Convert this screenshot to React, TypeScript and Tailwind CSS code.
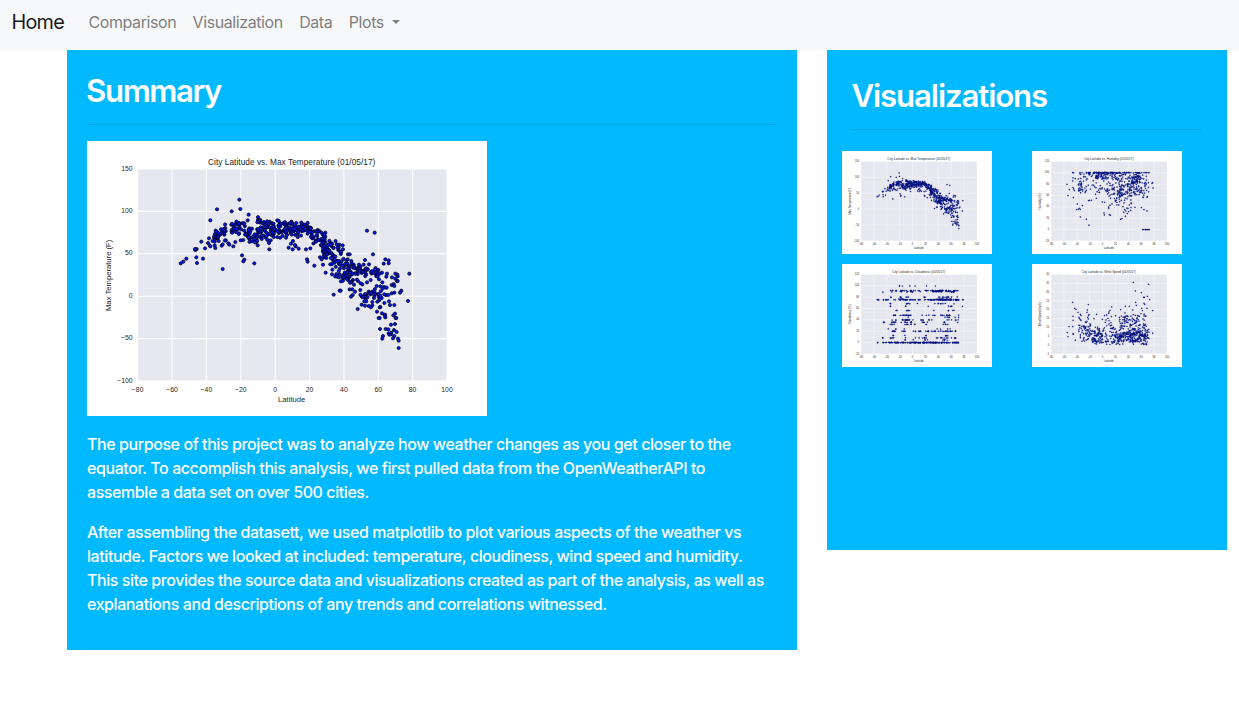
import React from "react";

type Point = [number, number];

/* All charts share a 1200 x 825 drawing space. */
const LEFT = 152;
const RIGHT = 1080;
const TOP = 84;
const BOTTOM = 720;

function rng(seed: number) {
  let s = seed;
  return () => {
    s = (s * 1664525 + 1013904223) % 4294967296;
    return s / 4294967296;
  };
}

function band(seed: number, count: number, path: [number, number, number][]): Point[] {
  const rand = rng(seed);
  const first = path[0][0];
  const last = path[path.length - 1][0];
  return Array.from({ length: count }, () => {
    const x = first + rand() * (last - first);
    let i = 0;
    while (i < path.length - 2 && x > path[i + 1][0]) i++;
    const [x0, y0, s0] = path[i];
    const [x1, y1, s1] = path[i + 1];
    const t = (x - x0) / (x1 - x0);
    const offset = (rand() + rand() - 1) * (s0 + (s1 - s0) * t);
    return [x, y0 + (y1 - y0) * t + offset] as Point;
  });
}

function box(seed: number, count: number, x0: number, x1: number, y0: number, y1: number, power = 1): Point[] {
  const rand = rng(seed);
  return Array.from({ length: count }, () => [x0 + rand() * (x1 - x0), y0 + Math.pow(rand(), power) * (y1 - y0)] as Point);
}

function parse(text: string): Point[] {
  return text
    .trim()
    .split(/\s+/)
    .map((pair) => pair.split(",").map(Number) as Point);
}

const grow = (points: Point[]): Point[] => points.map(([x, y]) => [x * 2.6667, y * 2.6667]);

const temperature: Point[] = [
  ...parse(`281,367 289,362 298,353 348,353 330,366 328,349 325,327 329,324 324,324 354,322 343,302 363,306 370,238
    390,205 434,211 460,204 457,176 485,221 407,384 465,343 472,356 469,361 502,367 547,325 482,238 551,298 546,306
    605,320 617,325 635,323 657,325 670,322 612,308 618,300 626,316 624,312 597,290 660,355 662,362 682,374 699,349
    704,355 708,371 716,395 735,400 840,269 863,275 858,340 715,275 725,310 733,307 740,461 758,449 761,449 812,504
    834,357 846,370 890,368 895,355 905,358 905,367 874,387 967,398 963,480 943,449 939,455 931,401 925,398 932,406
    930,420 935,621 935,599 933,593 922,585 918,592 929,573 921,567 912,551 924,549 919,523 928,531 924,518 926,531
    894,521 895,529 894,524 885,517 878,531 875,531 870,512 879,564 896,564 904,565 888,585 886,593 905,577 907,581
    912,580 913,575 922,492 909,492 906,481 892,486 880,498 878,499 824,491 834,494 845,495 852,499 856,493 856,483
    386,269 392,290 385,321 404,314 407,310 402,265 415,261 416,270 424,307 427,311 439,316 445,303 433,251 444,250
    454,247 472,247 456,277 368,313 370,316 366,292 377,300 387,280 390,282 388,287 390,292 385,292 383,313 395,300
    399,281 412,281 434,272 447,273 461,298 469,297 483,288 488,292 496,290 503,297 507,302 512,313 495,263 513,237
    520,237 519,244 531,243 571,238 554,246 590,246 613,242 616,247 602,249 645,248 653,251 660,255 672,261 680,271
    692,267 697,270 703,275 712,287 735,308 733,315 757,311 767,313 768,325 754,327 749,310 783,340 788,340 778,358
    782,355 793,360 800,371 801,378 816,371 820,376 830,371 864,398 878,398 885,395 900,398 898,407 915,409 925,413
    876,415 869,435 880,436 886,424 889,438 894,439 899,440 914,432 920,429 922,435 932,420 851,417 840,424 826,430
    821,427 813,420 810,416 801,431 788,445 796,445 804,452 797,462 792,467 820,447 824,466 832,466 861,471 862,464
    873,459 881,451 887,443 897,462 904,462 914,457 922,455 845,452 851,460 836,475 838,481 832,481 857,452 871,482
    876,478 884,471 892,460 875,468 879,474 880,464 762,421 768,419 790,425 779,411 784,418 798,417 795,400 788,407`),
  ...band(11, 24, [[380, 284, 30], [400, 286, 30], [425, 270, 34]]),
  ...band(18, 46, [[432, 264, 22], [460, 262, 26], [500, 285, 34], [515, 285, 36]]),
  ...band(12, 138, [[510, 262, 42], [560, 263, 32], [620, 265, 24], [665, 265, 25]]),
  ...band(13, 40, [[660, 270, 25], [690, 291, 26], [716, 306, 30]]),
  ...band(14, 84, [[704, 312, 34], [735, 350, 62], [775, 380, 62], [795, 397, 40]]),
  ...band(15, 14, [[765, 405, 24], [797, 403, 24]]),
  ...band(16, 40, [[792, 385, 24], [830, 391, 19], [875, 393, 20]]),
  ...band(17, 12, [[820, 463, 28], [860, 455, 20], [885, 472, 24]]),
];

const humidity = grow([
  ...parse(`105,100 108,134 112,116 123,81 122,90 130,83 139,84 123,110 125,114 127,119 124,140 136,159 151,164
    134,176 139,175 142,172 145,175 145,198 163,205 171,223 172,148 178,148 193,142 216,186 218,154 230,168 240,159
    232,191 235,193 217,192 211,153 170,149 266,205 270,203 275,184 280,196 286,188 296,178 309,169 328,170 345,180
    336,176 360,97 363,111 288,172 297,170 362,95 334,139 345,139 122,65 125,65 144,65 150,65 336,65 340,65 343,65
    348,65 351,65 332,236 341,236 343,236 346,236 349,236 352,236 339,236 334,236 333,139 290,182 292,162 281,180 278,176`),
  ...box(21, 95, 163, 330, 64, 67),
  ...box(22, 70, 140, 225, 67, 131, 1.4),
  ...box(23, 26, 190, 225, 67, 85),
  ...box(24, 62, 222, 270, 68, 132),
  ...box(25, 105, 262, 317, 69, 135),
  ...box(26, 40, 298, 325, 73, 106),
  ...box(27, 52, 310, 350, 70, 137),
  ...box(28, 34, 248, 298, 118, 172),
  ...box(29, 14, 138, 150, 90, 122),
  ...box(30, 8, 222, 255, 130, 172),
]);

const cloudRows: [number, number[][]][] = [
  [66, [[172, 174, 2], [181, 182, 1], [203, 205, 1], [219, 220, 1], [253, 255, 1], [280, 281, 1]]],
  [80, [[145, 165, 6], [173, 195, 6], [205, 240, 8], [244, 284, 10], [284, 326, 18], [335, 352, 5]]],
  [82.5, [[172, 182, 3], [196, 235, 4], [270, 340, 40]]],
  [84, [[122, 124, 1], [149, 150, 1], [194, 196, 1], [210, 213, 2], [326, 336, 3]]],
  [99.5, [[145, 148, 2], [173, 180, 3], [192, 203, 3], [245, 256, 3], [284, 350, 11]]],
  [107.5, [[105, 113, 4], [124, 164, 9], [168, 240, 24], [246, 290, 20], [290, 355, 48], [362, 364, 2]]],
  [105.5, [[170, 205, 5], [284, 337, 14]]],
  [119, [[144, 146, 2], [190, 205, 5], [226, 227, 1], [276, 338, 8]]],
  [127, [[145, 146, 2], [190, 192, 2], [258, 260, 1], [310, 338, 4], [361, 362, 1]]],
  [140, [[162, 171, 2], [188, 208, 5], [275, 276, 1], [311, 336, 4]]],
  [154, [[151, 162, 5], [170, 212, 12], [239, 279, 6], [295, 352, 12]]],
  [160, [[198, 200, 1], [307, 350, 6]]],
  [168, [[144, 162, 3], [180, 213, 14], [223, 280, 7], [305, 349, 6]]],
  [175, [[121, 132, 3], [149, 163, 7], [177, 209, 9], [237, 259, 5], [305, 310, 3], [347, 348, 1]]],
  [181.5, [[144, 163, 4], [182, 219, 8], [252, 255, 2], [286, 334, 4]]],
  [195, [[138, 140, 1], [160, 164, 2], [186, 188, 1], [278, 325, 4]]],
  [202, [[145, 164, 6], [174, 190, 4], [211, 236, 7], [246, 280, 11], [287, 345, 16]]],
  [215, [[152, 158, 2], [188, 189, 1], [251, 255, 2], [301, 326, 4]]],
  [222, [[121, 123, 2], [138, 167, 5], [190, 191, 1], [217, 254, 7], [282, 343, 13]]],
  [228, [[188, 192, 2], [213, 214, 1], [245, 257, 3], [300, 322, 5]]],
  [236, [[106, 110, 2], [121, 126, 3], [131, 172, 26], [174, 198, 14], [203, 303, 95], [304, 353, 30]]],
];

const cloudiness = grow(
  cloudRows.flatMap(([y, segments], row) =>
    segments.flatMap(([x0, x1, count], i) => box(100 + row * 17 + i * 5, count, x0, x1, y - 0.6, y + 0.6)),
  ),
);

const wind = grow([
  ...parse(`304,55 350,61 310,81 328,86 337,100 335,100 346,97 353,107 311,115 313,124 336,118 338,121 345,133
    362,140 362,208 122,115 128,133 132,136 169,122 166,138 123,157 123,169 122,188 111,188 106,206 108,218 123,209
    124,211 130,229 138,145 145,151 147,155 165,145 171,152 239,129 234,139 231,144 230,148 280,127 292,127 302,138
    279,147 266,137 194,151 186,164 211,166 218,155 224,153 329,133 331,140 141,160 142,164 145,167 147,169 167,160
    169,165 170,155 222,168 228,163 231,170 238,158 220,175 231,180 237,176 239,184`),
  ...box(41, 36, 140, 180, 172, 232),
  ...box(42, 26, 140, 176, 185, 218),
  ...box(43, 52, 180, 215, 237, 188, 1.2),
  ...box(44, 32, 185, 213, 207, 234),
  ...box(45, 34, 215, 248, 238, 185, 1.2),
  ...box(46, 120, 243, 308, 234, 205),
  ...box(47, 105, 250, 350, 215, 155, 1.2),
  ...box(48, 100, 303, 352, 234, 190, 1.3),
  ...box(49, 32, 268, 345, 190, 145),
  ...box(50, 20, 180, 352, 236, 242),
]);

interface ChartProps {
  className: string;
  title: string;
  yLabel: string;
  yTicks: string[];
  points: Point[];
  small?: boolean;
}

function Chart({ className, title, yLabel, yTicks, points, small = false }: ChartProps) {
  const xTicks = ["−80", "−60", "−40", "−20", "0", "20", "40", "60", "80", "100"];
  const xAt = (i: number) => LEFT + ((RIGHT - LEFT) * i) / (xTicks.length - 1);
  const yAt = (i: number) => BOTTOM - ((BOTTOM - TOP) * i) / (yTicks.length - 1);
  return (
    <svg
      viewBox="0 0 1200 825"
      preserveAspectRatio="none"
      className={className}
      fontFamily="'Liberation Sans', sans-serif"
      fill="#262626"
      role="img"
      aria-label={title}
    >
      <rect width="1200" height="825" fill="#fff" />
      <rect x={LEFT} y={TOP} width={RIGHT - LEFT} height={BOTTOM - TOP} fill="#e7e7f0" />
      <g stroke="#fff" strokeWidth={small ? 3 : 3.2}>
        {xTicks.map((tick, i) => (
          <line key={tick} x1={xAt(i)} x2={xAt(i)} y1={TOP} y2={BOTTOM} />
        ))}
        {yTicks.map((tick, i) => (
          <line key={tick} x1={LEFT} x2={RIGHT} y1={yAt(i)} y2={yAt(i)} />
        ))}
      </g>
      <g fontSize="20.5" textAnchor="middle">
        {xTicks.map((tick, i) => (
          <text key={tick} x={xAt(i)} y="752">
            {tick}
          </text>
        ))}
      </g>
      <g fontSize="20.5" textAnchor="end">
        {yTicks.map((tick, i) => (
          <text key={tick} x="137" y={yAt(i) + 5}>
            {tick}
          </text>
        ))}
      </g>
      <text x="614" y="73" fontSize="24.8" textLength={title.includes("Max") ? 502 : undefined} textAnchor="middle">
        {title}
      </text>
      <text x="614" y="783" fontSize="23" textAnchor="middle">
        Latitude
      </text>
      <text transform="translate(73 403) rotate(-90)" fontSize="23" textAnchor="middle">
        {yLabel}
      </text>
      <g fill={small ? "#0014a0" : "#0018f0"} stroke={small ? "#000850" : "#000018"} strokeWidth={small ? 1.8 : 2.2} opacity={small ? 0.96 : 1}>
        {points.map(([x, y], i) => (
          <circle key={i} cx={x} cy={y} r={small ? 5.1 : 4.8} />
        ))}
      </g>
    </svg>
  );
}

const temperatureTicks = ["−100", "−50", "0", "50", "100", "150"];
const percentTicks = ["−20", "0", "20", "40", "60", "80", "100", "120"];
const windTicks = ["−5", "0", "5", "10", "15", "20", "25", "30", "35", "40"];

export default function App() {
  return (
    <div className="min-h-[728px] w-[1239px] bg-white font-['Inter',sans-serif]">
      <nav className="flex h-[50px] items-start bg-[#f7f8fa] pl-[11.5px] text-base leading-6 tracking-[-0.026em] text-[#808080]">
        <a className="mt-[7px] w-[77px] text-[19.8px] leading-[30px] tracking-[-0.037em] text-[#1a1a1a]">Home</a>
        <div className="mt-[10px] flex gap-[16.4px] whitespace-nowrap">
          <a>Comparison</a>
          <a>Visualization</a>
          <a>Data</a>
          <a className="flex items-center">
            Plots
            <span className="ml-2 border-x-[4.5px] border-t-[4.5px] border-x-transparent border-t-[#808080]" />
          </a>
        </div>
      </nav>
      <main className="flex items-start gap-[30px] pl-[67px] text-white">
        <section className="h-[600px] w-[730px] bg-[#00b9ff] p-5">
          <h2 className="-ml-px h-[54px] pt-[2px] text-[31.2px] leading-[38px] font-semibold tracking-[-0.044em]">
            Summary
          </h2>
          <hr className="mb-4 w-[690px] border-black/10" />
          <Chart
            className="block h-[275px] w-[400px]"
            title="City Latitude vs. Max Temperature (01/05/17)"
            yLabel="Max Temperature (F)"
            yTicks={temperatureTicks}
            points={temperature}
          />
          <div className="mt-4 space-y-4 text-base leading-6 font-medium tracking-[-0.0265em] whitespace-nowrap">
            <p>
              The purpose of this project was to analyze how weather changes as you get closer to the
              <br />
              equator. To accomplish this analysis, we first pulled data from the OpenWeatherAPI to
              <br />
              assemble a data set on over 500 cities.
            </p>
            <p>
              After assembling the datasett, we used matplotlib to plot various aspects of the weather vs
              <br />
              latitude. Factors we looked at included: temperature, cloudiness, wind speed and humidity.
              <br />
              This site provides the source data and visualizations created as part of the analysis, as well as
              <br />
              explanations and descriptions of any trends and correlations witnessed.
            </p>
          </div>
        </section>
        <aside className="h-[500px] w-[400px] bg-[#00b9ff] pt-[25px]">
          <h2 className="ml-[24.5px] h-[54px] pt-[2px] text-[31.2px] leading-[38px] font-semibold tracking-[-0.036em]">
            Visualizations
          </h2>
          <hr className="ml-[25px] w-[350px] border-black/10" />
          <div className="mt-[21px] ml-[15px] grid w-[340px] grid-cols-2 gap-x-10 gap-y-[10px]">
            <Chart
              small
              className="block h-[103px] w-[150px]"
              title="City Latitude vs. Max Temperature (01/05/17)"
              yLabel="Max Temperature (F)"
              yTicks={temperatureTicks}
              points={temperature}
            />
            <Chart
              small
              className="block h-[103px] w-[150px]"
              title="City Latitude vs. Humidity (01/05/17)"
              yLabel="Humidity (%)"
              yTicks={percentTicks}
              points={humidity}
            />
            <Chart
              small
              className="block h-[103px] w-[150px]"
              title="City Latitude vs. Cloudiness (01/05/17)"
              yLabel="Cloudiness (%)"
              yTicks={percentTicks}
              points={cloudiness}
            />
            <Chart
              small
              className="block h-[103px] w-[150px]"
              title="City Latitude vs. Wind Speed (01/05/17)"
              yLabel="Wind Speed (mph)"
              yTicks={windTicks}
              points={wind}
            />
          </div>
        </aside>
      </main>
    </div>
  );
}
